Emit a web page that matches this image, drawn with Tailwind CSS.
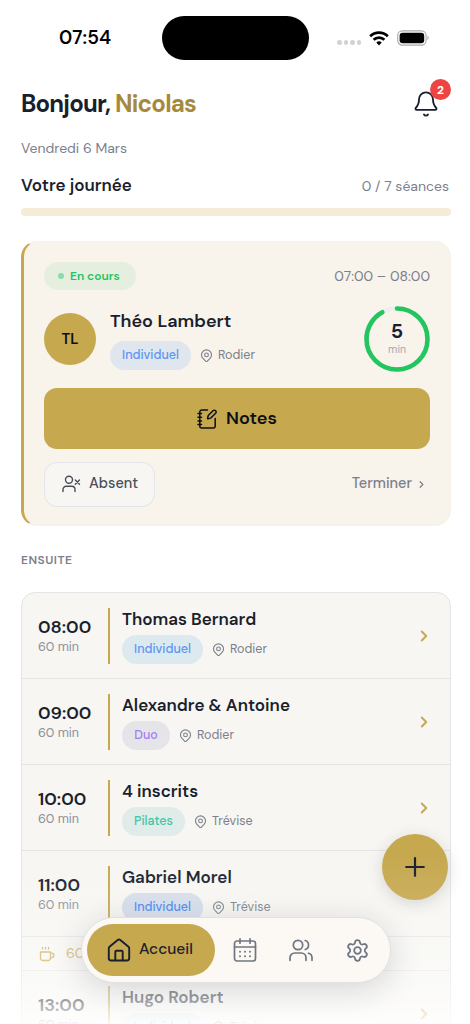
<!DOCTYPE html>
<html lang="fr">
<head>
<meta charset="utf-8">
<meta name="viewport" content="width=device-width, initial-scale=1">
<title>Accueil</title>
<script src="https://cdn.jsdelivr.net/npm/@tailwindcss/browser@4"></script>
</head>
<body class="bg-white">
<svg class="hidden">
  <symbol id="pin" viewBox="0 0 24 24" fill="none" stroke="currentColor" stroke-width="1.8" stroke-linecap="round" stroke-linejoin="round"><path d="M9 11a3 3 0 1 0 6 0a3 3 0 0 0-6 0"/><path d="M17.66 16.66L13.41 20.9a2 2 0 0 1-2.82 0l-4.25-4.24a8 8 0 1 1 11.32 0z"/></symbol>
  <symbol id="chev" viewBox="0 0 24 24" fill="none" stroke="currentColor" stroke-width="2.6" stroke-linecap="round" stroke-linejoin="round"><path d="M9 6l6 6l-6 6"/></symbol>
</svg>
<div class="relative flex h-[1024px] w-[470px] flex-col overflow-hidden bg-white px-[21px] font-['DM_Sans',Inter,sans-serif] text-[#1a1f2e]">
  <!-- Status bar -->
  <div class="flex h-[76px] shrink-0 items-center">
    <div class="ml-[38px] w-[103px] text-[19px] font-semibold tracking-[0.1px] text-black">07:54</div>
    <div class="h-[44px] w-[147px] rounded-full bg-black"></div>
    <div class="mt-[9px] ml-[28px] flex gap-[2px]">
      <i class="size-[4.5px] rounded-full bg-[#d2d2d2]"></i><i class="size-[4.5px] rounded-full bg-[#d2d2d2]"></i><i class="size-[4.5px] rounded-full bg-[#d2d2d2]"></i><i class="size-[4.5px] rounded-full bg-[#d2d2d2]"></i>
    </div>
    <svg class="ml-[8px] h-[15px] w-[20px]" viewBox="0 0 20 15" fill="none" stroke="#000" stroke-width="2.7"><path d="M1.2 5.2a12.6 12.6 0 0 1 17.6 0"/><path d="M4.6 8.8a7.7 7.7 0 0 1 10.8 0"/><path d="M10 14.5l-2.7-3.1a4 4 0 0 1 5.4 0z" fill="#000" stroke="none"/></svg>
    <svg class="ml-[8px] h-[16px] w-[33px]" viewBox="0 0 33 16"><rect x=".7" y=".9" width="28.4" height="14.2" rx="4.6" fill="none" stroke="#a9a9a9" stroke-width="1.1"/><rect x="2.6" y="2.8" width="24.6" height="10.4" rx="3" fill="#000"/><path d="M30.5 5.8v4.4c1.5-.5 1.5-3.900 0-4.400z" fill="#a0a0a0"/></svg>
  </div>

  <!-- Greeting -->
  <div class="flex h-[56px] shrink-0 items-center justify-between">
    <h1 class="text-[24px] font-bold tracking-[-0.8px]">Bonjour, <span class="text-[#a68a3c]">Nicolas</span></h1>
    <div class="relative mr-[9px]">
      <svg class="size-[28px]" viewBox="0 0 24 24" fill="none" stroke="currentColor" stroke-width="1.6" stroke-linecap="round" stroke-linejoin="round"><path d="M3.260 15.330A1 1 0 0 0 4 17h16a1 1 0 0 0 .74-1.670C19.410 13.960 18 12.500 18 8A6 6 0 0 0 6 8c0 4.500-1.410 5.960-2.740 7.330"/><path d="M10.270 21a2 2 0 0 0 3.460 0"/></svg>
      <span class="absolute -top-[11px] -right-[11px] flex size-[21px] items-center justify-center rounded-full bg-[#ef4444] text-[12px] font-bold text-white">2</span>
    </div>
  </div>
  <div class="flex h-[32px] shrink-0 items-center text-[14px] text-[#7b808c]">Vendredi 6 Mars</div>
  <div class="flex h-[44px] shrink-0 items-center justify-between">
    <h2 class="text-[17px] font-semibold">Votre journée</h2>
    <span class="text-[14px] text-[#7b808c]">0 / 7 séances</span>
  </div>
  <div class="h-[8px] w-[430px] shrink-0 rounded-full bg-[#f5ecd8]"></div>

  <!-- Current session -->
  <section class="mt-[25px] h-[285px] w-[430px] shrink-0 rounded-[16px] border border-l-3 border-[#f7f1e7] border-l-[#c6a84f] bg-[#f8f3eb] px-5 pt-[20px]">
    <div class="flex h-[28px] items-center justify-between">
      <span class="flex h-[28px] w-[92px] items-center gap-[6px] rounded-full bg-[#e6efdf] pl-[14px] text-[12px] font-semibold text-[#22c55e]"><i class="size-[6px] rounded-full bg-[#8bdcab]"></i>En cours</span>
      <span class="text-[14px] text-[#7b808c]">07:00 – 08:00</span>
    </div>
    <div class="mt-[16px] flex h-[66px] items-center">
      <span class="flex size-[52px] items-center justify-center rounded-full bg-[#c6a84f] text-[15px] font-semibold text-[#0c0f18]">TL</span>
      <div class="ml-[14px] flex-1 pt-px">
        <div class="h-[24px] text-[18px] leading-[24px] font-semibold">Théo Lambert</div>
        <div class="mt-[8px] flex items-center">
          <span class="flex h-[29px] w-[81px] items-center justify-center rounded-full bg-[#dfe6ee] text-[12.500px] font-medium text-[#5b94f5]">Individuel</span>
          <svg class="ml-[8px] size-[15px] text-[#7b808c]"><use href="#pin"/></svg>
          <span class="ml-[4px] text-[12.500px] text-[#7b808c]">Rodier</span>
        </div>
      </div>
      <div class="relative size-[66px]">
        <svg class="size-[66px]" viewBox="0 0 66 66" fill="none" stroke-width="4.600"><circle cx="33" cy="33" r="30.500" stroke="#eeeeee"/><circle cx="33" cy="33" r="30.500" stroke="#22c55e" stroke-linecap="round" pathLength="100" stroke-dasharray="92 100" transform="rotate(-90 33 33)"/></svg>
        <div class="absolute inset-0 flex flex-col items-center pt-[14px]"><b class="text-[20px] leading-[22px] font-bold">5</b><span class="mt-[2px] text-[10.500px] leading-[12px] text-[#a6a9b1]">min</span></div>
      </div>
    </div>
    <button class="mt-[16px] flex h-[61px] w-full items-center justify-center gap-[9px] rounded-[13px] bg-[#c6a84f] text-[18px] font-semibold text-[#0c0f18]">
      <svg class="size-[20px]" viewBox="0 0 20 20" fill="none" stroke="currentColor" stroke-width="1.500" stroke-linecap="round" stroke-linejoin="round"><path d="M10.500 1H4.800a2 2 0 0 0-2 2v14a2 2 0 0 0 2 2h11.400a2 2 0 0 0 2-2V9.500"/><path d="M1 4.500h3.500M1 8.200h3.500M1 11.900h3.500M1 15.600h3.500"/><path d="M18.600 1.700a1.800 1.800 0 0 0-2.600 0l-4.300 4.300a2 2 0 0 0-.5.800l-.7 2.500a.4.400 0 0 0 .5.500l2.500-.7a2 2 0 0 0 .8-.5l4.300-4.300a1.800 1.800 0 0 0 0-2.600z"/></svg>Notes
    </button>
    <div class="mt-[12px] flex h-[46px] items-center justify-between">
      <button class="flex h-[45px] w-[111px] items-center gap-[8px] rounded-[13px] border border-[#e4e5ea] bg-[#f7f6f2] pl-[17px] text-[14.500px] font-medium text-[#4a4e5b]">
        <svg class="h-[18px] w-[19px] shrink-0" viewBox="0 0 19 18" fill="none" stroke="currentColor" stroke-width="1.400" stroke-linecap="round" stroke-linejoin="round"><circle cx="7" cy="4.700" r="3.500"/><path d="M1 16.500v-2a3.200 3.200 0 0 1 3.200-3.200h5.600a3.200 3.200 0 0 1 3.200 3.200v2M13.300 5l4.200 4.200M17.500 5l-4.200 4.200"/></svg>Absent</button>
      <span class="flex items-center pr-[3px] text-[14.500px] font-medium text-[#7b808c]">Terminer<svg class="ml-[4px] size-[11px]"><use href="#chev"/></svg></span>
    </div>
  </section>

  <h3 class="mt-[23px] h-[22px] shrink-0 text-[12px] leading-[22px] font-semibold tracking-[0.5px] text-[#7b808c]">ENSUITE</h3>

  <!-- Upcoming sessions -->
  <section class="mt-[21px] h-[460px] w-[430px] shrink-0 rounded-t-[14px] border border-[#e5e5e8] bg-[#f7f6f2]">
    <article class="flex h-[86px] items-center border-b border-[#e5e5e8] pl-[16px]">
      <div class="w-[70px]"><div class="text-[18px] leading-[22px] font-semibold">08:00</div><div class="text-[12.500px] leading-[18px] text-[#8c909a]">60 min</div></div>
      <div class="h-[56px] w-[2px] bg-[#c6a84f]"></div>
      <div class="ml-[12px] flex-1"><div class="text-[17px] leading-[22px] font-semibold">Thomas Bernard</div>
        <div class="mt-[5px] flex items-center"><span class="flex h-[29px] w-[81px] items-center justify-center rounded-full bg-[#dceaf0] text-[12.500px] font-medium text-[#5b94f5]">Individuel</span><svg class="ml-[8px] size-[15px] text-[#7b808c]"><use href="#pin"/></svg><span class="ml-[4px] text-[12.500px] text-[#7b808c]">Rodier</span></div></div>
      <svg class="mr-[17px] size-[18px] text-[#c6a84f]"><use href="#chev"/></svg>
    </article>
    <article class="flex h-[86px] items-center border-b border-[#e5e5e8] pl-[16px]">
      <div class="w-[70px]"><div class="text-[18px] leading-[22px] font-semibold">09:00</div><div class="text-[12.500px] leading-[18px] text-[#8c909a]">60 min</div></div>
      <div class="h-[56px] w-[2px] bg-[#c6a84f]"></div>
      <div class="ml-[12px] flex-1"><div class="text-[17px] leading-[22px] font-semibold">Alexandre &amp; Antoine</div>
        <div class="mt-[5px] flex items-center"><span class="flex h-[29px] w-[48px] items-center justify-center rounded-full bg-[#e5e5e9] text-[12.500px] font-medium text-[#a47cf3]">Duo</span><svg class="ml-[8px] size-[15px] text-[#7b808c]"><use href="#pin"/></svg><span class="ml-[4px] text-[12.500px] text-[#7b808c]">Rodier</span></div></div>
      <svg class="mr-[17px] size-[18px] text-[#c6a84f]"><use href="#chev"/></svg>
    </article>
    <article class="flex h-[86px] items-center border-b border-[#e5e5e8] pl-[16px]">
      <div class="w-[70px]"><div class="text-[18px] leading-[22px] font-semibold">10:00</div><div class="text-[12.500px] leading-[18px] text-[#8c909a]">60 min</div></div>
      <div class="h-[56px] w-[2px] bg-[#c6a84f]"></div>
      <div class="ml-[12px] flex-1"><div class="text-[17px] leading-[22px] font-semibold">4 inscrits</div>
        <div class="mt-[5px] flex items-center"><span class="flex h-[29px] w-[63px] items-center justify-center rounded-full bg-[#dfecea] text-[12.500px] font-medium text-[#3fc6a5]">Pilates</span><svg class="ml-[8px] size-[15px] text-[#7b808c]"><use href="#pin"/></svg><span class="ml-[4px] text-[12.500px] text-[#7b808c]">Trévise</span></div></div>
      <svg class="mr-[17px] size-[18px] text-[#c6a84f]"><use href="#chev"/></svg>
    </article>
    <article class="flex h-[86px] items-center border-b border-[#e5e5e8] pl-[16px]">
      <div class="w-[70px]"><div class="text-[18px] leading-[22px] font-semibold">11:00</div><div class="text-[12.500px] leading-[18px] text-[#8c909a]">60 min</div></div>
      <div class="h-[56px] w-[2px] bg-[#c6a84f]"></div>
      <div class="ml-[12px] flex-1"><div class="text-[17px] leading-[22px] font-semibold">Gabriel Morel</div>
        <div class="mt-[5px] flex items-center"><span class="flex h-[29px] w-[81px] items-center justify-center rounded-full bg-[#d6deeb] text-[12.500px] font-medium text-[#4286f5]">Individuel</span><svg class="ml-[8px] size-[15px] text-[#7b808c]"><use href="#pin"/></svg><span class="ml-[4px] text-[12.500px] text-[#7b808c]">Trévise</span></div></div>
    </article>
    <div class="flex h-[34px] items-center border-b border-[#e5e5e8] pl-[17px] text-[14px] text-[#c6a84f]">
      <svg class="mr-[11px] size-[16px]" viewBox="0 0 16 16" fill="none" stroke="currentColor" stroke-width="1.300" stroke-linecap="round" stroke-linejoin="round"><path d="M1.500 6h10v6a2.500 2.500 0 0 1-2.500 2.500H4A2.500 2.500 0 0 1 1.500 12zM11.500 7.200h1.200a2.200 2.200 0 0 1 0 4.400h-1.200M3.500 1.500v1.500M6.500 1.500v1.500M9.500 1.500v1.500"/></svg>60 min
    </div>
    <article class="flex h-[86px] items-center pl-[16px]">
      <div class="w-[70px]"><div class="text-[18px] leading-[22px] font-semibold">13:00</div><div class="text-[12.500px] leading-[18px] text-[#8c909a]">60 min</div></div>
      <div class="h-[56px] w-[2px] bg-[#c6a84f]"></div>
      <div class="ml-[12px] flex-1"><div class="text-[17px] leading-[22px] font-semibold">Hugo Robert</div>
        <div class="mt-[5px] flex items-center"><span class="flex h-[29px] w-[81px] items-center justify-center rounded-full bg-[#dceaf0] text-[12.500px] font-medium text-[#5b94f5]">Individuel</span><svg class="ml-[8px] size-[15px] text-[#7b808c]"><use href="#pin"/></svg><span class="ml-[4px] text-[12.500px] text-[#7b808c]">Trévise</span></div></div>
      <svg class="mr-[17px] size-[18px] text-[#c6a84f]"><use href="#chev"/></svg>
    </article>
  </section>

  <!-- Floating action button -->
  <button class="absolute top-[834px] left-[382px] flex size-[66px] items-center justify-center rounded-full bg-[#c6a84f] shadow-[0_4px_16px_rgba(26,31,46,0.16)]">
    <svg class="size-[20px]" viewBox="0 0 20 20" fill="none" stroke="#1a1f2e" stroke-width="2.200" stroke-linecap="round"><path d="M10 1.200v17.600M1.200 10h17.600"/></svg>
  </button>

  <!-- Bottom fade -->
  <div class="pointer-events-none absolute inset-x-0 bottom-0 h-[170px] bg-[linear-gradient(to_bottom,rgba(255,255,255,0)_0%,rgba(255,255,255,0.1)_30%,rgba(255,255,255,0.36)_60%,rgba(255,255,255,0.55)_85%,rgba(255,255,255,0.88)_100%)]"></div>

  <!-- Tab bar -->
  <nav class="absolute top-[917px] left-[81px] flex h-[66px] w-[310px] items-center rounded-full border border-[#e2e1df] bg-[#fcf9f4] pl-[5px] text-[#6f7583] shadow-[0_6px_32px_rgba(26,31,46,0.17)]">
    <div class="flex h-[52px] w-[128px] items-center rounded-full bg-[#c6a84f] pl-[20px] text-[#1a1f2e]">
      <svg class="size-[24px]" viewBox="0 0 24 24" fill="none" stroke="currentColor" stroke-width="1.900" stroke-linecap="round" stroke-linejoin="round"><path d="M1.800 10.300a2 2 0 0 1 .7-1.500l8.200-6.800a2 2 0 0 1 2.600 0l8.200 6.800a2 2 0 0 1 .7 1.500v10a2.200 2.200 0 0 1-2.200 2.200H4a2.200 2.200 0 0 1-2.200-2.200z"/><path d="M8.300 22.300v-8.500a1 1 0 0 1 1-1h5.400a1 1 0 0 1 1 1v8.500"/></svg>
      <span class="ml-[8px] text-[15.500px] font-medium">Accueil</span>
    </div>
    <svg class="ml-[18px] size-[24px]" viewBox="0 0 24 24" fill="none" stroke="currentColor" stroke-width="1.700" stroke-linecap="round" stroke-linejoin="round"><rect x="1.500" y="3" width="21" height="20" rx="2.500"/><path d="M7 .9v4.300M17 .9v4.300M1.500 9h21"/><path stroke-width="2" d="M7 13.700h.01M12 13.700h.01M17 13.700h.01M7 18.300h.01M12 18.300h.01M17 18.300h.01"/></svg>
    <svg class="ml-[32px] size-[24px]" viewBox="0 0 24 24" fill="none" stroke="currentColor" stroke-width="1.700" stroke-linecap="round" stroke-linejoin="round"><circle cx="9" cy="7" r="4.700"/><path d="M1 22.300v-2.600a4.700 4.700 0 0 1 4.700-4.700h6.600a4.700 4.700 0 0 1 4.700 4.700v2.600M16.200 2.500a4.700 4.700 0 0 1 0 9M23 22.300v-2.600a4.700 4.700 0 0 0-3.500-4.500"/></svg>
    <svg class="ml-[32px] size-[25px]" viewBox="0 0 24 24" fill="none" stroke="currentColor" stroke-width="1.700" stroke-linecap="round" stroke-linejoin="round"><path d="M9.671 4.136a2.340 2.340 0 0 1 4.659 0 2.340 2.340 0 0 0 3.319 1.915 2.340 2.340 0 0 1 2.330 4.033 2.340 2.340 0 0 0 0 3.831 2.340 2.340 0 0 1-2.330 4.033 2.340 2.340 0 0 0-3.319 1.915 2.340 2.340 0 0 1-4.659 0 2.340 2.340 0 0 0-3.320-1.915 2.340 2.340 0 0 1-2.330-4.033 2.340 2.340 0 0 0 0-3.831A2.340 2.340 0 0 1 6.350 6.051a2.340 2.340 0 0 0 3.319-1.915"/><circle cx="12" cy="12" r="3.200"/></svg>
  </nav>
</div>
</body>
</html>
